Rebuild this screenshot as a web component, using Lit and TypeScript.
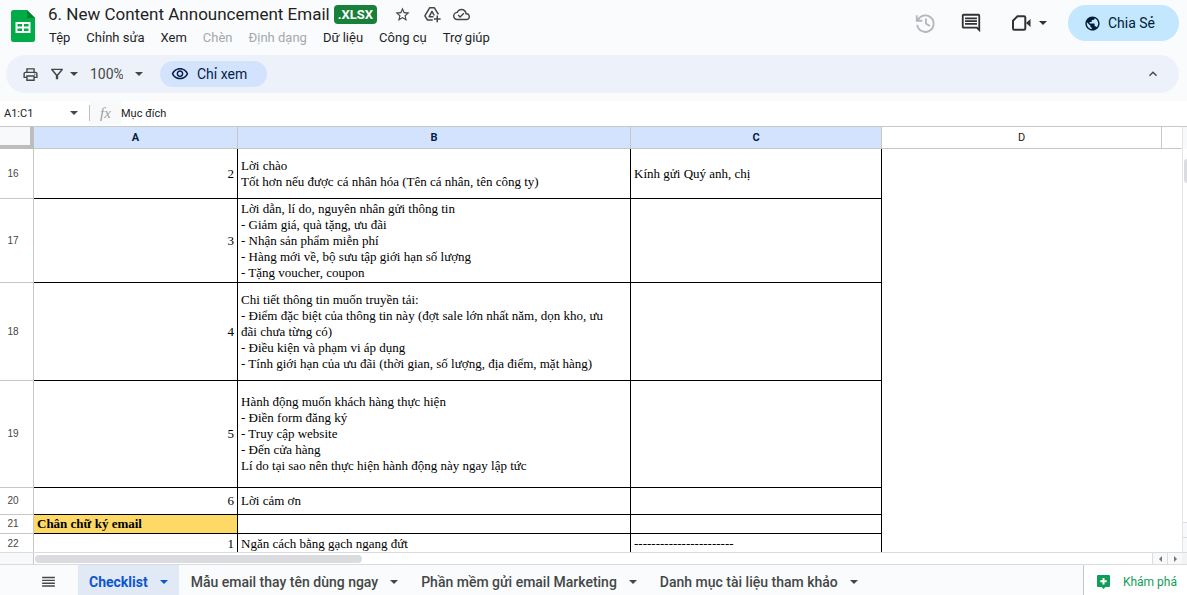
import { LitElement, html, css } from "lit";
import { customElement, state } from "lit/decorators.js";
import { classMap } from "lit/directives/class-map.js";

const ICONS: Record<string, string> = {
  star: "M22 9.24l-7.19-.62L12 2 9.19 8.63 2 9.24l5.46 4.73L5.82 21 12 17.27 18.18 21l-1.63-7.03L22 9.24zM12 15.4l-3.76 2.27 1-4.28-3.32-2.88 4.38-.38L12 6.1l1.71 4.04 4.38.38-3.32 2.88 1 4.28L12 15.4z",
  cloud: "M19.35 10.04C18.67 6.59 15.64 4 12 4 9.11 4 6.6 5.64 5.35 8.04 2.34 8.36 0 10.91 0 14c0 3.31 2.69 6 6 6h13c2.76 0 5-2.24 5-5 0-2.64-2.05-4.78-4.65-4.96zM19 18H6c-2.21 0-4-1.79-4-4s1.79-4 4-4h.71C7.37 7.69 9.48 6 12 6c3.04 0 5.5 2.46 5.5 5.5v.5H19c1.66 0 3 1.34 3 3s-1.34 3-3 3zm-9-3.82l-2.09-2.09L6.5 13.5 10 17l6.01-6.01-1.41-1.41z",
  comment: "M21.99 4c0-1.1-.89-2-1.99-2H4c-1.1 0-2 .9-2 2v12c0 1.1.9 2 2 2h14l4 4-.01-18zM20 4v13.17L18.83 16H4V4h16zM5.5 12h13v2h-13zm0-3h13v2h-13zm0-3h13v2h-13z",
  print: "M19 8h-1V3H6v5H5c-1.66 0-3 1.34-3 3v6h4v4h12v-4h4v-6c0-1.66-1.34-3-3-3zM8 5h8v3H8V5zm8 14H8v-4h8v4zm2-4v-2H6v2H4v-4c0-.55.45-1 1-1h14c.55 0 1 .45 1 1v4h-2zM17 11.5a1 1 0 1 0 2 0 1 1 0 1 0-2 0z",
  filter: "M2 3h20v2l-8 9.5V21h-4v-6.500L2 5V3zm3.500 2.200L12 13l6.500-7.800z",
  globe: "M12 2C6.48 2 2 6.48 2 12s4.48 10 10 10 10-4.48 10-10S17.52 2 12 2zm-1 17.93c-3.95-.49-7-3.85-7-7.93 0-.62.08-1.21.21-1.79L9 15v1c0 1.1.9 2 2 2v1.93zm6.9-2.54c-.26-.81-1-1.39-1.9-1.39h-1v-3c0-.55-.45-1-1-1H8v-2h2c.55 0 1-.45 1-1V7h2c1.1 0 2-.9 2-2v-.41c2.93 1.19 5 4.06 5 7.41 0 2.08-.8 3.97-2.1 5.39z",
  eye: "M12 6c3.79 0 7.17 2.13 8.82 5.5C19.17 14.87 15.79 17 12 17s-7.17-2.13-8.82-5.5C4.83 8.13 8.21 6 12 6m0-2C7 4 2.73 7.11 1 11.5 2.73 15.89 7 19 12 19s9.27-3.11 11-7.5C21.27 7.11 17 4 12 4zm0 5c1.38 0 2.5 1.12 2.5 2.5S13.38 14 12 14s-2.5-1.12-2.5-2.5S10.62 9 12 9m0-2c-2.48 0-4.5 2.02-4.5 4.5S9.52 16 12 16s4.5-2.02 4.5-4.5S14.48 7 12 7z",
  up: "M12 8l-6 6 1.410 1.410L12 10.830l4.590 4.580L18 14z",
  menu: "M3 18h18v-2H3v2zm0-4h18v-2H3v2zm0-4h18V8H3v2zm0-6v2h18V4z",
};

const icon = (name: string, size: number) =>
  html`<svg width=${size} height=${size} viewBox="0 0 24 24" aria-hidden="true"><path fill="currentColor" fill-rule="evenodd" d=${ICONS[name]}></path></svg>`;

const caret = html`<svg class="caret" width="8" height="4" viewBox="0 0 8 4" aria-hidden="true"><path fill="currentColor" d="M0 0h8L4 4z"></path></svg>`;

const sheetsLogo = html`<svg width="24" height="32" viewBox="0 0 24 32" aria-hidden="true">
  <path fill="#00ac47" d="M2.500 0H16l8 8v21.500a2.500 2.500 0 0 1-2.500 2.500h-19A2.500 2.500 0 0 1 0 29.500v-27A2.500 2.500 0 0 1 2.500 0z"></path>
  <path fill="#00832d" d="M16 0l8 8h-8z"></path>
  <path fill="#fff" fill-rule="evenodd" d="M4.500 12h15v11h-15zM6.500 14v2.500H11V14zM13 14v2.500h4.500V14zM6.500 18.500V21H11v-2.500zM13 18.500V21h4.500v-2.500z"></path>
</svg>`;

const driveAdd = html`<svg width="18" height="18" viewBox="0 0 24 24" fill="none" stroke="currentColor" stroke-width="2" stroke-linejoin="round" aria-hidden="true">
  <path d="M13 20H6L2.500 14.500 9 3.500h6l5.500 9"></path>
  <path d="M14 15.500H8.200L12 8.500l3 5.500"></path>
  <path d="M19 14v9M14.500 18.500h9"></path>
</svg>`;

const historyIcon = html`<svg width="22" height="22" viewBox="0 0 24 24" fill="none" stroke="currentColor" stroke-width="2" aria-hidden="true">
  <path d="M4 9.500A9 9 0 1 1 3.500 14M3 3.500v6h6M13 7v5.500l4.300 2.800"></path>
</svg>`;

const meetIcon = html`<svg width="19" height="16" viewBox="0 0 19 16" aria-hidden="true">
  <path fill="none" stroke="currentColor" stroke-width="2" stroke-linejoin="round" d="M5.500 1.200H12a1.300 1.300 0 0 1 1.300 1.300v11a1.300 1.300 0 0 1-1.300 1.300H2.300A1.300 1.300 0 0 1 1 13.500V5.700z"></path>
  <path fill="currentColor" d="M14 8l4.500-4v8z"></path>
</svg>`;

const exploreIcon = html`<svg width="13" height="14" viewBox="0 0 13 14" aria-hidden="true">
  <path fill="#0f9d58" d="M1 0h11a1 1 0 0 1 1 1v10a1 1 0 0 1-1 1H8.500L6.500 14l-2-2H1a1 1 0 0 1-1-1V1a1 1 0 0 1 1-1z"></path>
  <path fill="#fff" d="M5.500 3h2v2.200h2.200v2H7.500v2.200h-2V7.200H3.300v-2h2.200z"></path>
</svg>`;

interface Row {
  n: number;
  height: number;
  a: string;
  b: string;
  c: string;
  section?: boolean;
}

const ROWS: Row[] = [
  { n: 16, height: 50, a: "2", b: "Lời chào\nTốt hơn nếu được cá nhân hóa (Tên cá nhân, tên công ty)", c: "Kính gửi Quý anh, chị" },
  { n: 17, height: 84, a: "3", b: "Lời dẫn, lí do, nguyên nhân gửi thông tin\n- Giảm giá, quà tặng, ưu đãi\n- Nhận sản phẩm miễn phí\n- Hàng mới về, bộ sưu tập giới hạn số lượng\n- Tặng voucher, coupon", c: "" },
  { n: 18, height: 98, a: "4", b: "Chi tiết thông tin muốn truyền tải:\n- Điểm đặc biệt của thông tin này (đợt sale lớn nhất năm, dọn kho, ưu\nđãi chưa từng có)\n- Điều kiện và phạm vi áp dụng\n- Tính giới hạn của ưu đãi (thời gian, số lượng, địa điểm, mặt hàng)", c: "" },
  { n: 19, height: 107, a: "5", b: "Hành động muốn khách hàng thực hiện\n- Điền form đăng ký\n- Truy cập website\n- Đến cửa hàng\nLí do tại sao nên thực hiện hành động này ngay lập tức", c: "" },
  { n: 20, height: 27, a: "6", b: "Lời cảm ơn", c: "" },
  { n: 21, height: 19, a: "Chân chữ ký email", b: "", c: "", section: true },
  { n: 22, height: 20, a: "1", b: "Ngăn cách bằng gạch ngang đứt", c: "-----------------------" },
];

@customElement("sheet-header")
class SheetHeader extends LitElement {
  static styles = css`
    :host { display: block; background: #f9fbfd; color: #1f1f1f; }
    button { font: inherit; color: inherit; background: none; border: 0; padding: 0; margin: 0; display: flex; align-items: center; }
    svg { display: block; flex: none; }
    .top { display: flex; align-items: center; gap: 13px; height: 55px; padding: 0 8px 0 11px; }
    .logo { display: block; padding-bottom: 3px; }
    .names { flex: 1; display: flex; flex-direction: column; gap: 4px; padding-bottom: 3px; }
    .title { display: flex; align-items: center; color: #444746; }
    h1 { margin: 0 4px 0 0; font-size: 17px; font-weight: 400; line-height: 20px; color: #1f1f1f; white-space: nowrap; }
    .badge { background: #188038; color: #fff; font-size: 13px; font-weight: 700; line-height: 19px; padding: 0 4px; border-radius: 4px; min-width: 35px; text-align: center; }
    .marks { display: flex; gap: 12px; margin-left: 17px; }
    .menus { display: flex; gap: 16px; font-size: 13px; line-height: 20px; white-space: nowrap; padding-left: 1px; }
    .menus button:disabled { color: #a5a8ab; }
    .actions { display: flex; align-items: center; color: #444746; padding-bottom: 9px; }
    .history { color: #b4b7ba; margin-right: 24px; }
    .comment { margin-right: 30px; color: #303331; }
    .meet { gap: 8px; color: #303331; margin-right: 21px; }
    .share { height: 36px; padding: 0 24px 0 16px; gap: 7px; border-radius: 18px; background: #c2e7ff; color: #001d35; font-size: 14px; }
    .toolbar { display: flex; align-items: center; height: 38px; margin: 0 8px 8px 6px; padding: 0 18px 0 16px; border-radius: 19px; background: #edf2fa; color: #444746; font-size: 14px; }
    .filter { gap: 6px; margin: 0 12px 0 11px; }
    .zoom { display: grid; align-items: center; margin-right: 17px; }
    .zoom select { grid-area: 1 / 1; appearance: none; border: 0; background: none; font: inherit; color: inherit; padding: 0 20px 0 0; width: 53px; }
    .zoom .caret { grid-area: 1 / 1; justify-self: end; pointer-events: none; }
    .view { height: 26px; padding: 0 20px 0 11px; gap: 8px; border-radius: 13px; background: #d3e3fd; color: #041e49; }
    .collapse { margin-left: auto; }
  `;

  render() {
    const menus: [string, boolean][] = [
      ["Tệp", true], ["Chỉnh sửa", true], ["Xem", true], ["Chèn", false],
      ["Định dạng", false], ["Dữ liệu", true], ["Công cụ", true], ["Trợ giúp", true],
    ];
    return html`
      <header class="top">
        <a class="logo" href="#" aria-label="Trang tính">${sheetsLogo}</a>
        <div class="names">
          <div class="title">
            <h1>6. New Content Announcement Email</h1>
            <span class="badge">.XLSX</span>
            <div class="marks">
              <button aria-label="Gắn dấu sao">${icon("star", 17)}</button>
              <button aria-label="Thêm vào Drive">${driveAdd}</button>
              <button aria-label="Đã lưu">${icon("cloud", 17)}</button>
            </div>
          </div>
          <nav class="menus">${menus.map(([label, on]) => html`<button ?disabled=${!on}>${label}</button>`)}</nav>
        </div>
        <div class="actions">
          <button class="history" aria-label="Lịch sử">${historyIcon}</button>
          <button class="comment" aria-label="Nhận xét">${icon("comment", 22)}</button>
          <button class="meet" aria-label="Cuộc gọi">${meetIcon}${caret}</button>
          <button class="share">${icon("globe", 17)}Chia Sẻ</button>
        </div>
      </header>
      <div class="toolbar">
        <button aria-label="In">${icon("print", 17)}</button>
        <button class="filter" aria-label="Bộ lọc">${icon("filter", 14)}${caret}</button>
        <div class="zoom">
          <select aria-label="Thu phóng"><option>100%</option></select>
          ${caret}
        </div>
        <button class="view">${icon("eye", 18)}Chỉ xem</button>
        <button class="collapse" aria-label="Thu gọn">${icon("up", 16)}</button>
      </div>
    `;
  }
}

@customElement("sheet-formula-bar")
class SheetFormulaBar extends LitElement {
  static styles = css`
    :host { display: flex; align-items: center; box-sizing: border-box; height: 25px; padding-bottom: 1px; background: #fff; color: #202124; font-size: 11px; }
    input { border: 0; padding: 0; margin: 0; background: none; font: inherit; color: inherit; min-width: 0; outline: 0; }
    .name { width: 66px; padding-left: 4px; }
    button { border: 0; background: none; padding: 0; margin-right: 11px; color: #444746; display: flex; }
    .fx { align-self: stretch; display: flex; align-items: center; justify-content: center; width: 31px; background: #f8f9fa; color: #9a9da1; font: italic 15px "Liberation Serif", serif; }
    .divider { width: 1px; height: 16px; background: #c0c0c0; }
    .value { flex: 1; }
  `;

  render() {
    return html`
      <input class="name" aria-label="Hộp tên" .value=${"A1:C1"} />
      <button aria-label="Phạm vi">${caret}</button>
      <span class="divider"></span>
      <label class="fx" for="value">fx</label>
      <input class="value" id="value" readonly .value=${"Mục đích"} />
    `;
  }
}

@customElement("sheet-grid")
class SheetGrid extends LitElement {
  static styles = css`
    :host { flex: 1; min-height: 0; display: grid; grid-template: minmax(0, 1fr) 12px / minmax(0, 1fr) 5px; background: #fff; }
    .view { overflow: hidden; }
    table { width: 100%; table-layout: fixed; border-collapse: separate; border-spacing: 0; border-top: 1px solid #c7c7c7; }
    .c-num { width: 34px; }
    .c-a { width: 204px; }
    .c-b { width: 393px; }
    .c-c { width: 251px; }
    .c-d { width: 280px; }
    th, td { box-sizing: border-box; padding: 0; border: 0 solid #c7c7c7; border-width: 0 1px 1px 0; overflow: hidden; }
    th { font-size: 11px; font-weight: 400; line-height: 14px; color: #444746; text-align: center; }
    tbody th { font-family: "Liberation Sans", sans-serif; font-size: 10px; padding-right: 7px; }
    thead th { height: 22px; color: #202124; }
    thead th.on { background: #d3e3fd; color: #041e49; font-weight: 700; }
    thead th.corner { background: #f8f9fa; border: solid #bdbdbd; border-width: 0 4px 4px 0; }
    td { font: 13px/16px "Liberation Serif", serif; color: #000; white-space: pre-wrap; padding: 0 3px; border-color: #000; vertical-align: middle; }
    td.num { text-align: right; }
    td.section { background: #ffd966; font-weight: 700; }
    td.free { border-color: transparent; }
    thead th.last { border-color: transparent transparent #c7c7c7 transparent; }
    .vbar { border-left: 1px solid #e4e5e7; border-top: 1px solid #c7c7c7; background: #fff; display: flex; flex-direction: column; }
    .vtop { height: 22px; margin-bottom: 10px; background: #f8f9fa; }
    .vthumb { height: 24px; margin-left: 1px; border-radius: 4px 0 0 4px; background: #dadce0; }
    .step { height: 14px; border-top: 1px solid #dadce0; background: #f8f9fa; }
    .grow { flex: 1; }
    .hbar { border-top: 1px solid #dadce0; display: flex; align-items: center; grid-column: 1 / -1; }
    .pad { width: 33px; align-self: stretch; background: #f8f9fa; border-right: 1px solid #c7c7c7; }
    .hthumb { width: 327px; height: 8px; margin-left: 1px; border-radius: 4px; background: #dadce0; }
    button { margin: 0; padding: 0; width: 15px; align-self: stretch; border: 0; border-left: 1px solid #dadce0; background: #f8f9fa; color: #777; display: flex; align-items: center; justify-content: center; }
    .end { width: 5px; align-self: stretch; background: #f1f3f4; }
  `;

  render() {
    return html`
      <div class="view">
        <table>
          <colgroup>
            <col class="c-num" /><col class="c-a" /><col class="c-b" /><col class="c-c" /><col class="c-d" /><col />
          </colgroup>
          <thead>
            <tr>
              <th class="corner"></th>
              <th class="on" scope="col">A</th>
              <th class="on" scope="col">B</th>
              <th class="on" scope="col">C</th>
              <th scope="col">D</th>
              <th class="last"></th>
            </tr>
          </thead>
          <tbody>
            ${ROWS.map((r) => html`
              <tr style="height:${r.height}px">
                <th scope="row">${r.n}</th>
                <td class=${classMap({ num: !r.section, section: !!r.section })}>${r.a}</td>
                <td>${r.b}</td>
                <td>${r.c}</td>
                <td class="free"></td>
                <td class="free"></td>
              </tr>`)}
          </tbody>
        </table>
      </div>
      <div class="vbar"><div class="vtop"></div><div class="vthumb"></div><div class="grow"></div><div class="step"></div><div class="step"></div></div>
      <div class="hbar">
        <div class="pad"></div>
        <div class="hthumb"></div>
        <div class="grow"></div>
        <button aria-label="Cuộn trái"><svg width="3" height="6" viewBox="0 0 3 6"><path fill="currentColor" d="M3 0v6L0 3z"></path></svg></button>
        <button aria-label="Cuộn phải"><svg width="3" height="6" viewBox="0 0 3 6"><path fill="currentColor" d="M0 0v6l3-3z"></path></svg></button>
        <div class="end"></div>
      </div>
    `;
  }
}

@customElement("sheet-tabs")
class SheetTabs extends LitElement {
  static styles = css`
    :host { display: flex; align-items: stretch; height: 31px; box-sizing: border-box; border-top: 1px solid #dadce0; background: #f9fbfd; color: #444746; font-size: 14px; }
    button { font: inherit; color: inherit; border: 0; background: none; margin: 0; padding: 0; display: flex; align-items: center; padding-top: 4px; white-space: nowrap; }
    .all { padding-left: 40px; margin-right: 21px; }
    .tabs { flex: 1; display: flex; gap: 1px; overflow: hidden; }
    .tab { padding-left: 11px; padding-right: 11px; gap: 12px; font-weight: 500; }
    .tab.on { background: #e1e9f7; color: #0b57d0; font-weight: 700; }
    .explore { border-left: 1px solid #c7c7c7; background: #fff; color: #0f9d58; font-size: 12px; padding-left: 13px; padding-right: 10px; gap: 13px; }
  `;

  @state() private active = 0;

  render() {
    const tabs = ["Checklist", "Mẫu email thay tên dùng ngay", "Phần mềm gửi email Marketing", "Danh mục tài liệu tham khảo"];
    return html`
      <button class="all" aria-label="Tất cả trang tính">${icon("menu", 17)}</button>
      <nav class="tabs">
        ${tabs.map((t, i) => html`<button class=${classMap({ tab: true, on: i === this.active })} @click=${() => (this.active = i)}>${t}${caret}</button>`)}
      </nav>
      <button class="explore">${exploreIcon}Khám phá</button>
    `;
  }
}

@customElement("app-root")
class AppRoot extends LitElement {
  static styles = css`
    :host { display: flex; flex-direction: column; height: 100vh; overflow: hidden; font-family: Roboto, "Liberation Sans", sans-serif; background: #fff; }
  `;

  render() {
    return html`
      <sheet-header></sheet-header>
      <sheet-formula-bar></sheet-formula-bar>
      <sheet-grid></sheet-grid>
      <sheet-tabs></sheet-tabs>
    `;
  }
}
